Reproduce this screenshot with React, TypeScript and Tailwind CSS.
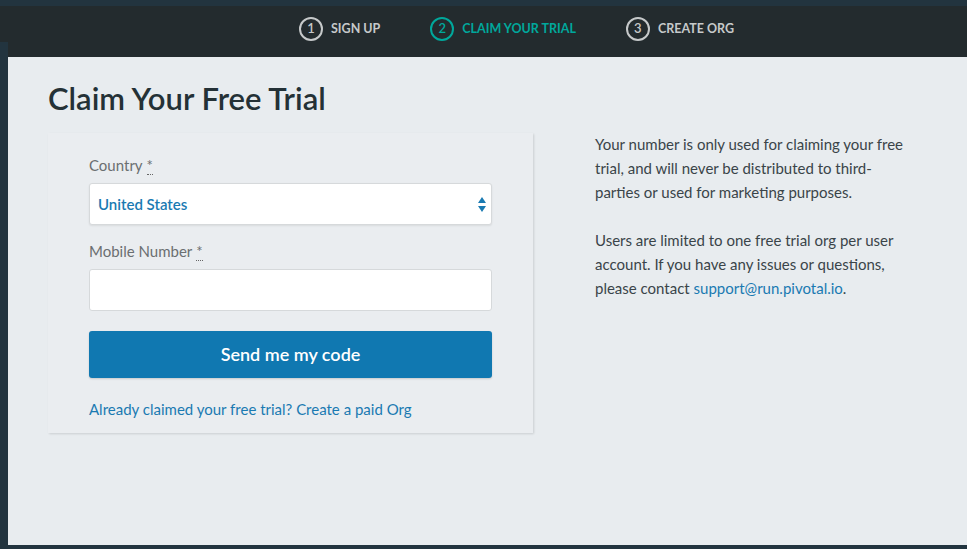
const FONT = { fontFamily: '"Source Sans Pro", Lato, "Open Sans", sans-serif' };

type Step = { n: number; label: string; active?: boolean };

const STEPS: Step[] = [
  { n: 1, label: "Sign up" },
  { n: 2, label: "Claim your trial", active: true },
  { n: 3, label: "Create org" },
];

function StepItem({ step }: { step: Step }) {
  const color = step.active ? "text-[#00a89c] border-[#00a89c]" : "text-[#c6c9ca] border-[#c6c9ca]";
  return (
    <div className={`flex items-center gap-[8px] whitespace-nowrap ${step.active ? "text-[#00a89c]" : "text-[#c6c9ca]"}`}>
      <span
        className={`flex h-[24px] w-[24px] items-center justify-center rounded-full border-2 text-[13px] font-semibold ${color}`}
      >
        {step.n}
      </span>
      <span className="text-[12.5px] font-bold uppercase">{step.label}</span>
    </div>
  );
}

function Required() {
  return <abbr className="ml-1 border-b border-dotted border-[#666] no-underline">*</abbr>;
}

export default function App() {
  return (
    <div className="flex h-[549px] w-[967px] flex-col bg-[#22343f] pt-[6px] pb-[4px]" style={FONT}>
      <header className="flex h-[51px]">
        <div className="flex w-[8px] flex-col">
          <div className="h-[36px] bg-[#232b2e]" />
        </div>
        <div className="flex flex-1 items-center bg-[#232b2e] pl-[291px] pb-[5px]">
          <nav className="flex items-center gap-[50px]">
            {STEPS.map((s) => (
              <StepItem key={s.n} step={s} />
            ))}
          </nav>
        </div>
      </header>

      <main className="ml-[8px] flex flex-1 bg-[#e8ecef] pl-[40px] pt-[23px]">
        <div className="flex flex-col">
          <h1 className="text-[31px] leading-[36px] font-semibold text-[#243136]">Claim Your Free Trial</h1>

          <form className="mt-[17px] flex w-[485px] flex-col bg-[#eaedf0] px-[41px] pt-[22px] pb-[14px] shadow-[1px_1px_2px_rgba(0,0,0,0.12)]">
            <label className="text-[15px] leading-[20px] text-[#6b6f71]">
              Country
              <Required />
            </label>
            <div className="relative mt-[8px] flex h-[42px] items-center rounded-[3px] border border-[#d6d9db] bg-white pl-[8px] shadow-[0_1px_2px_rgba(0,0,0,0.08)]">
              <span className="text-[15px] font-semibold text-[#1a7ab2]">United States</span>
              <svg className="absolute right-[5px] top-[13px]" width="8" height="15" viewBox="0 0 8 15">
                <path d="M4 0 L8 6 L0 6 Z" fill="#1a7ab2" />
                <path d="M4 15 L8 9 L0 9 Z" fill="#1a7ab2" />
              </svg>
            </div>

            <label className="mt-[16px] text-[15px] leading-[20px] text-[#6b6f71]">
              Mobile Number
              <Required />
            </label>
            <input
              type="text"
              className="mt-[8px] h-[42px] rounded-[3px] border border-[#d6d9db] bg-white px-[8px] outline-none"
            />

            <button
              type="button"
              className="mt-[20px] h-[47px] rounded-[3px] bg-[#1078b1] text-[18px] font-semibold text-white shadow-[0_1px_2px_rgba(0,0,0,0.15)]"
            >
              Send me my code
            </button>

            <a className="mt-[21px] text-[15px] leading-[20px] text-[#1a7ab2]">
              Already claimed your free trial? Create a paid Org
            </a>
          </form>
        </div>

        <aside className="ml-[62px] mt-[52px] w-[314px] text-[15px] leading-[24px] text-[#3a4449]">
          <p>
            Your number is only used for claiming your free trial, and will never be distributed to third-parties or
            used for marketing purposes.
          </p>
          <p className="mt-[24px]">
            Users are limited to one free trial org per user account. If you have any issues or questions, please
            contact <a className="text-[#1a7ab2]">support@run.pivotal.io</a>.
          </p>
        </aside>
      </main>
    </div>
  );
}
